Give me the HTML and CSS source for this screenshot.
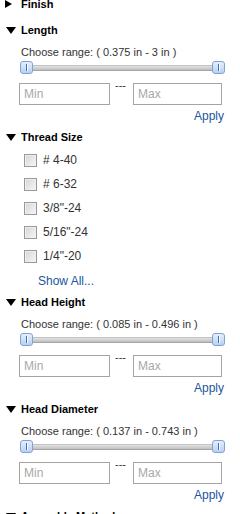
FILE: index.html
```html
<!DOCTYPE html>
<html lang="en">
<head>
    <meta charset="UTF-8">
    <meta name="viewport" content="width=device-width, initial-scale=1.0">
    <title>Filters</title>
    <link rel="stylesheet" href="styles.css">
</head>
<body>
    <div class="filters">
        <div class="facet collapsed">
            <div class="facet-title"><span class="arrow right"></span>Finish</div>
        </div>

        <div class="facet">
            <div class="facet-title"><span class="arrow down"></span>Length</div>
            <div class="range-label">Choose range: ( 0.375 in - 3 in )</div>
            <div class="slider">
                <span class="handle"></span>
                <span class="track"></span>
                <span class="handle"></span>
            </div>
            <div class="range-inputs">
                <input type="text" class="min" placeholder="Min">
                <span class="dash">---</span>
                <input type="text" class="max" placeholder="Max">
            </div>
            <div class="apply"><a href="#">Apply</a></div>
        </div>

        <div class="facet">
            <div class="facet-title"><span class="arrow down"></span>Thread Size</div>
            <ul class="options">
                <li><input type="checkbox"><label># 4-40</label></li>
                <li><input type="checkbox"><label># 6-32</label></li>
                <li><input type="checkbox"><label>3/8"-24</label></li>
                <li><input type="checkbox"><label>5/16"-24</label></li>
                <li><input type="checkbox"><label>1/4"-20</label></li>
            </ul>
            <div class="show-all"><a href="#">Show All...</a></div>
        </div>

        <div class="facet">
            <div class="facet-title"><span class="arrow down"></span>Head Height</div>
            <div class="range-label">Choose range: ( 0.085 in - 0.496 in )</div>
            <div class="slider">
                <span class="handle"></span>
                <span class="track"></span>
                <span class="handle"></span>
            </div>
            <div class="range-inputs">
                <input type="text" class="min" placeholder="Min">
                <span class="dash">---</span>
                <input type="text" class="max" placeholder="Max">
            </div>
            <div class="apply"><a href="#">Apply</a></div>
        </div>

        <div class="facet">
            <div class="facet-title"><span class="arrow down"></span>Head Diameter</div>
            <div class="range-label">Choose range: ( 0.137 in - 0.743 in )</div>
            <div class="slider">
                <span class="handle"></span>
                <span class="track"></span>
                <span class="handle"></span>
            </div>
            <div class="range-inputs">
                <input type="text" class="min" placeholder="Min">
                <span class="dash">---</span>
                <input type="text" class="max" placeholder="Max">
            </div>
            <div class="apply"><a href="#">Apply</a></div>
        </div>

        <div class="facet">
            <div class="facet-title"><span class="arrow down"></span>Assembly Method</div>
        </div>
    </div>
</body>
</html>
```

FILE: styles.css
```css
body {
    margin: 0;
    padding: 0;
    background: #fff;
    font-family: "Liberation Sans", Arial, sans-serif;
    color: #333;
    overflow: hidden;
}
.filters {
    margin-top: -4px;
    width: 240px;
}
.facet {
    padding-bottom: 5px;
}
.facet.collapsed {
    padding-bottom: 10px;
}
.facet-title {
    display: flex;
    align-items: center;
    height: 16px;
    font-size: 11px;
    font-weight: bold;
    color: #000;
}
.arrow {
    width: 0;
    height: 0;
    border-style: solid;
    border-color: transparent;
}
.arrow.down {
    margin: 1px 5px 0 6px;
    border-width: 7px 5px 0 5px;
    border-top-color: #000;
}
.arrow.right {
    margin: 0 9px 0 5px;
    border-width: 4.5px 0 4.5px 7px;
    border-left-color: #000;
}
.range-label {
    margin: 6px 0 0 21px;
    height: 16px;
    line-height: 16px;
    font-size: 11px;
    color: #333;
}
.slider {
    display: flex;
    align-items: center;
    margin: 1px 15px 0 20px;
    height: 13px;
}
.handle {
    position: relative;
    width: 11px;
    height: 11px;
    border: 1px solid #7fa3d8;
    border-radius: 3px;
    background: linear-gradient(#e4effd, #b9d1f2);
}
.handle::after {
    content: "";
    position: absolute;
    left: 5px;
    top: 2px;
    width: 1px;
    height: 7px;
    background: #3f6fb8;
    box-shadow: 1px 0 0 #fff;
}
.track {
    flex: 1;
    height: 4px;
    border-top: 1px solid #c4c4c4;
    border-bottom: 1px solid #a4a4a4;
    background: linear-gradient(#e2e2e2, #bfbfbf);
}
.range-inputs {
    display: flex;
    margin: 9px 0 0 19px;
    height: 22px;
}
.range-inputs input {
    box-sizing: border-box;
    height: 22px;
    margin: 0;
    padding: 0 4px;
    border: 1px solid #a4a4a4;
    font-family: "Liberation Sans", Arial, sans-serif;
    font-size: 12px;
    color: #333;
    outline: none;
}
.range-inputs input::placeholder {
    color: #a8a8a8;
}
.range-inputs .min {
    width: 91px;
}
.range-inputs .max {
    width: 89px;
}
.dash {
    width: 11px;
    margin: -4px 7px 0 5px;
    font-size: 11px;
    line-height: 12px;
    color: #333;
}
.apply {
    margin-top: 3px;
    padding-right: 16px;
    text-align: right;
    height: 16px;
    line-height: 16px;
    font-size: 12px;
}
.apply a,
.show-all a {
    color: #1c55a0;
    text-decoration: none;
}
.options {
    list-style: none;
    margin: 3px 0 0 0;
    padding: 0 0 0 24px;
}
.options li {
    display: flex;
    align-items: center;
    height: 24px;
}
.options input {
    appearance: none;
    -webkit-appearance: none;
    box-sizing: border-box;
    width: 13px;
    height: 13px;
    margin: 0 6px 0 0;
    border: 1px solid #9a9a9a;
    background: linear-gradient(135deg, #d6d6d6, #f6f6f6);
    box-shadow: inset 0 0 0 1px #eee;
}
.options label {
    font-size: 12px;
    line-height: 16px;
    color: #333;
}
.show-all {
    margin: 5px 0 0 38px;
    height: 16px;
    line-height: 16px;
    font-size: 12px;
}
```
